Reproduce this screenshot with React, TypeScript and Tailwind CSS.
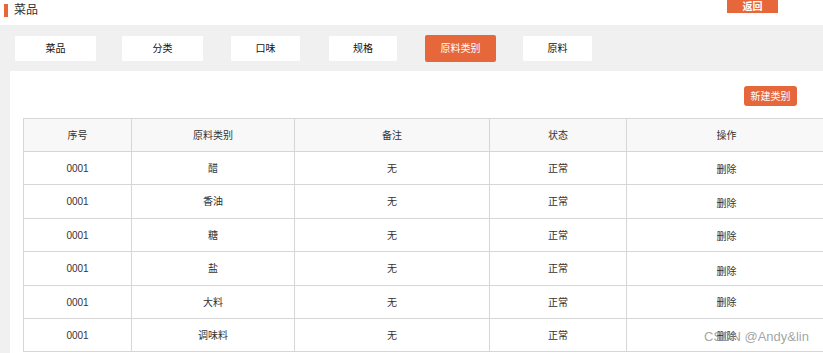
import React from "react";

const tabs = [
  { name: "菜品", w: "w-[81px]", ml: "ml-0" },
  { name: "分类", w: "w-[81px]", ml: "ml-[26px]" },
  { name: "口味", w: "w-[69px]", ml: "ml-[28px]" },
  { name: "规格", w: "w-[68px]", ml: "ml-[29px]" },
  { name: "原料类别", w: "w-[71px]", ml: "ml-[28px]", active: true },
  { name: "原料", w: "w-[69px]", ml: "ml-[27px]" },
];

const rows = [
  { no: "0001", type: "醋", pad: "pt-[3px]", h: "h-[33px]" },
  { no: "0001", type: "香油", pad: "pt-[4px]", h: "h-[34px]" },
  { no: "0001", type: "糖", pad: "pt-[2px]", h: "h-[33px]" },
  { no: "0001", type: "盐", pad: "pt-[5px]", h: "h-[34px]" },
  { no: "0001", type: "大料", pad: "pt-0", h: "h-[33px]" },
  { no: "0001", type: "调味料", pad: "pt-[2px]", h: "h-[33px]" },
];

const cell = "border border-[#d6d6d6] text-center align-middle";

export default function App() {
  return (
    <div
      className="relative h-[353px] w-[823px] overflow-hidden bg-[#f0f0f0] text-[#333]"
      style={{ fontFamily: '"Liberation Sans", "Noto Sans CJK SC", sans-serif' }}
    >
      {/* header */}
      <div className="flex h-[25px] items-start bg-white">
        <div className="ml-[4px] mt-[4px] h-[13px] w-[4px] bg-[#e5673a]" />
        <div className="ml-[6px] mt-[2px] text-[12px] leading-[16px] text-[#333]">菜品</div>
        <button className="ml-auto mr-[45px] h-[13px] w-[51px] bg-[#e5673a] text-[10px] font-bold leading-[11px] text-white">
          返回
        </button>
      </div>

      {/* tabs */}
      <div className="flex h-[46px] items-center pl-[15px]">
        {tabs.map((t) => (
          <div
            key={t.name}
            className={
              t.active
                ? `flex h-[27px] ${t.w} ${t.ml} items-center justify-center rounded-[2px] bg-[#e5673a] text-[10px] text-white`
                : `flex h-[25px] ${t.w} ${t.ml} items-center justify-center rounded-[1px] bg-white text-[10px] text-[#111]`
            }
          >
            {t.name}
          </div>
        ))}
      </div>

      {/* panel */}
      <div className="ml-[10px] h-[282px] overflow-hidden bg-white">
        <div className="flex justify-end pr-[26px] pt-[15px]">
          <button className="h-[20px] w-[53px] rounded-[3px] bg-[#e5673a] text-[10px] text-white">
            新建类别
          </button>
        </div>
        <div className="ml-[13px] mt-[12px] w-[850px]">
          <table className="border-collapse text-[10px] text-[#333]">
            <thead>
              <tr className="h-[33px] bg-[#f8f8f8]">
                <th className={`${cell} w-[108px] font-normal`}>序号</th>
                <th className={`${cell} w-[163px] font-normal`}>原料类别</th>
                <th className={`${cell} w-[195px] font-normal`}>备注</th>
                <th className={`${cell} w-[137px] font-normal`}>状态</th>
                <th className={`${cell} w-[200px] font-normal`}>操作</th>
              </tr>
            </thead>
            <tbody>
              {rows.map((r, i) => (
                <tr key={i} className={r.h}>
                  <td className={cell}>{r.no}</td>
                  <td className={cell}>{r.type}</td>
                  <td className={cell}>无</td>
                  <td className={cell}>正常</td>
                  <td className={cell}>
                    <div className={r.pad}>删除</div>
                  </td>
                </tr>
              ))}
            </tbody>
          </table>
        </div>
      </div>

      <div className="absolute left-[704px] top-[327px] text-[13px] text-[#999]/90">CSDN @Andy&amp;lin</div>
    </div>
  );
}
